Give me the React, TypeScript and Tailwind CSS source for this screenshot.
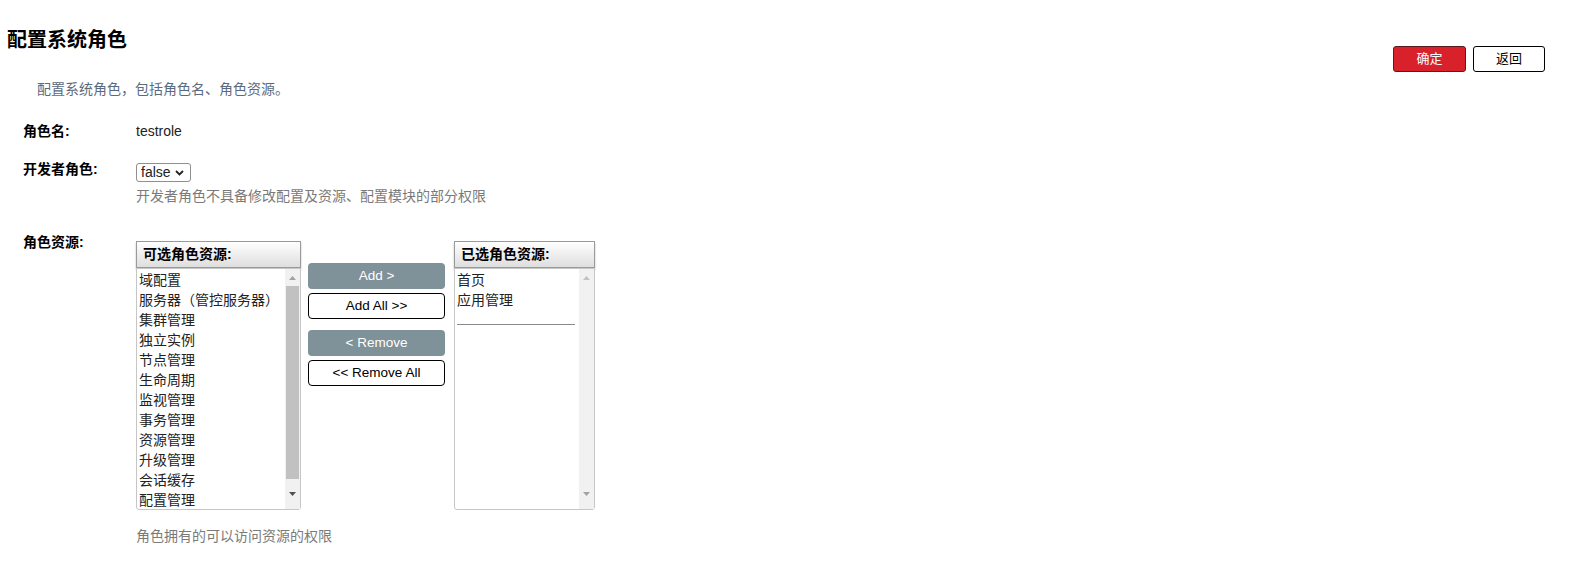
const leftItems = [
  "域配置",
  "服务器（管控服务器）",
  "集群管理",
  "独立实例",
  "节点管理",
  "生命周期",
  "监视管理",
  "事务管理",
  "资源管理",
  "升级管理",
  "会话缓存",
  "配置管理",
];

const rightItems = ["首页", "应用管理"];

function Arrow({ up, color }: { up?: boolean; color: string }) {
  return (
    <svg width="7" height="4" viewBox="0 0 7 4" className="block">
      <polygon points={up ? "3.5,0 7,4 0,4" : "0,0 7,0 3.5,4"} fill={color} />
    </svg>
  );
}

function ListHeader({ title }: { title: string }) {
  return (
    <div className="h-[27px] border border-[#9a9a9a] bg-gradient-to-b from-[#ffffff] to-[#dedede] shadow-[0_2px_2px_rgba(0,0,0,0.25)] pl-[6px] flex items-center text-[14px] font-bold text-black">
      {title}
    </div>
  );
}

function ListBox({ items, active, separator }: { items: string[]; active?: boolean; separator?: boolean }) {
  return (
    <div className="h-[242px] border border-[#c6c6c6] rounded-b-[3px] flex bg-white">
      <div className="flex-1 pt-[1px] pl-[2px] overflow-hidden">
        {items.map((it) => (
          <div key={it} className="h-[20px] leading-[20px] text-[14px] text-[#222] whitespace-nowrap">
            {it}
          </div>
        ))}
        {separator && <div className="mt-[14px] mr-[4px] border-t border-[#8a8a8a]" />}
      </div>
      <div className="w-[15px] bg-[#f1f1f1] flex flex-col items-center">
        <div className="h-[17px] flex items-center justify-center">
          <Arrow up color={active ? "#a3a3a3" : "#c2c2c2"} />
        </div>
        {active ? (
          <div className="w-[13px] h-[193px] bg-[#c1c1c1]" />
        ) : (
          <div className="h-[193px]" />
        )}
        <div className="flex-1 flex items-center justify-center">
          <Arrow color={active ? "#505050" : "#a3a3a3"} />
        </div>
      </div>
    </div>
  );
}

function MoveButton({ label, filled }: { label: string; filled?: boolean }) {
  return (
    <div
      className={
        filled
          ? "h-[26px] rounded-[4px] bg-[#7f9199] text-white text-[13.5px] flex items-center justify-center"
          : "h-[26px] rounded-[4px] border border-black bg-white text-black text-[13.5px] flex items-center justify-center"
      }
    >
      {label}
    </div>
  );
}

export default function App() {
  return (
    <div className="min-h-[561px] bg-white text-black font-['Liberation_Sans','Noto_Sans_CJK_SC',sans-serif] pr-[26px]">
      <div className="flex justify-between">
        <div className="pt-[26px]">
          <h1 className="pl-[7px] text-[20px] leading-[28px] font-bold">配置系统角色</h1>
          <p className="mt-[25px] pl-[37px] text-[14px] leading-[20px] text-[#5b6b7f]">配置系统角色，包括角色名、角色资源。</p>
        </div>
        <div className="pt-[46px] flex gap-[7px]">
          <div className="w-[73px] h-[26px] rounded-[3px] border border-[#5a1a1e] bg-[#d8212b] text-white text-[13px] flex items-center justify-center">
            确定
          </div>
          <div className="w-[72px] h-[26px] rounded-[3px] border border-black bg-white text-black text-[13px] flex items-center justify-center">
            返回
          </div>
        </div>
      </div>

      <div className="pl-[23px] mt-[22px]">
        <div className="flex">
          <div className="w-[113px] text-[14px] leading-[20px] font-bold">角色名:</div>
          <div className="text-[14px] leading-[20px] text-[#222]">testrole</div>
        </div>

        <div className="flex mt-[18px]">
          <div className="w-[113px] text-[14px] leading-[20px] font-bold">开发者角色:</div>
          <div className="pt-[4px]">
            <div className="w-[55px] h-[19px] border border-[#8f8f8f] rounded-[3px] flex items-center justify-between pl-[4px] pr-[6px] text-[14px] text-[#222]">
              <span className="leading-[17px]">false</span>
              <svg width="9" height="6" viewBox="0 0 9 6">
                <polyline points="1,1 4.5,4.5 8,1" fill="none" stroke="#222" strokeWidth="1.8" />
              </svg>
            </div>
            <div className="mt-[4px] text-[14px] leading-[20px] text-[#7a7a7a]">开发者角色不具备修改配置及资源、配置模块的部分权限</div>
          </div>
        </div>

        <div className="flex mt-[26px]">
          <div className="w-[113px] text-[14px] leading-[20px] font-bold">角色资源:</div>
          <div className="pt-[9px]">
            <div className="flex">
              <div className="w-[165px]">
                <ListHeader title="可选角色资源:" />
                <ListBox items={leftItems} active />
              </div>
              <div className="w-[137px] ml-[7px] pt-[22px] flex flex-col">
                <MoveButton label="Add >" filled />
                <div className="mt-[4px]">
                  <MoveButton label="Add All >>" />
                </div>
                <div className="mt-[11px]">
                  <MoveButton label="< Remove" filled />
                </div>
                <div className="mt-[4px]">
                  <MoveButton label="<< Remove All" />
                </div>
              </div>
              <div className="w-[141px] ml-[9px]">
                <ListHeader title="已选角色资源:" />
                <ListBox items={rightItems} separator />
              </div>
            </div>
            <div className="mt-[16px] text-[14px] leading-[20px] text-[#7a7a7a]">角色拥有的可以访问资源的权限</div>
          </div>
        </div>
      </div>
    </div>
  );
}
